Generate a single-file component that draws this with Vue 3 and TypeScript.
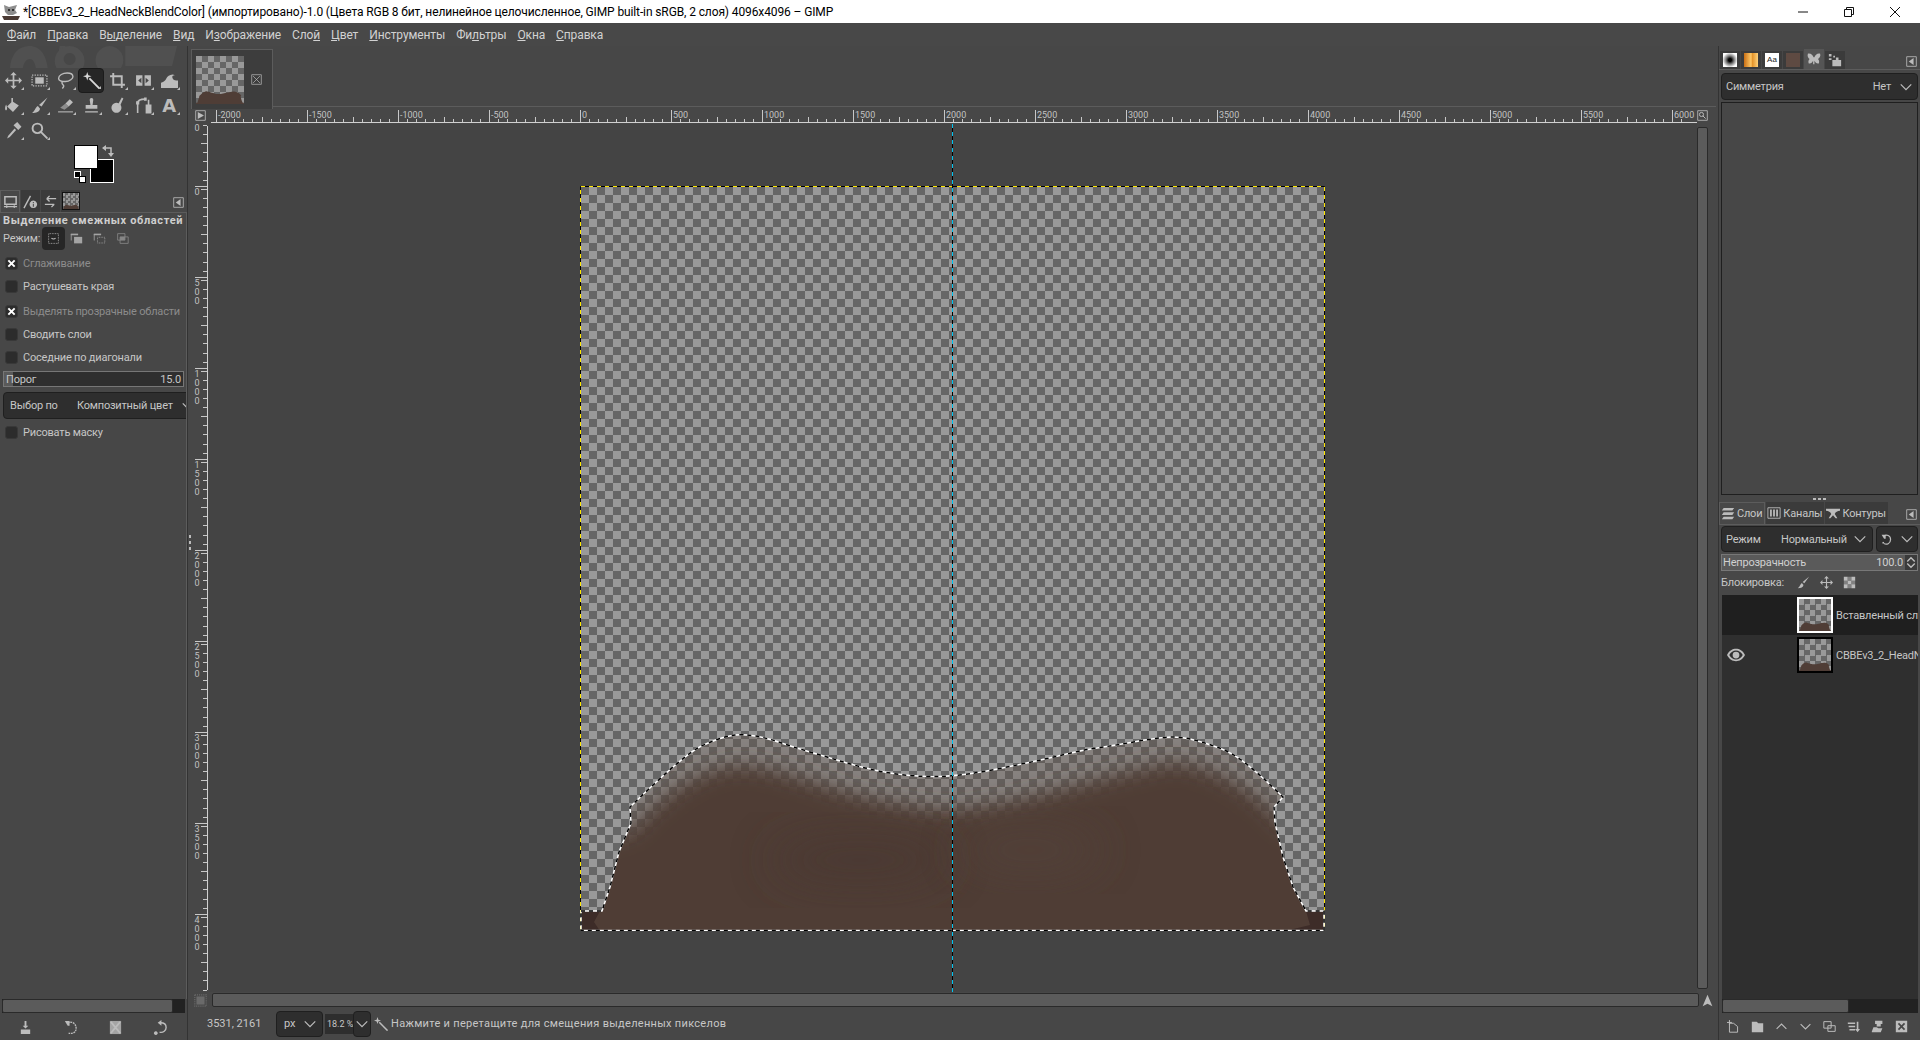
<script setup lang="ts">
import { h } from 'vue'
import type { FunctionalComponent } from 'vue'

interface IconDef { f?: string; s?: string; w?: number; dash?: string }

const icons: Record<string, IconDef[]> = {
  move: [{ s: 'M8 2v12M2 8h12', w: 1.6 }, { f: 'M8 0l3 3H5zM8 16l-3-3h6zM0 8l3-3v6zM16 8l-3 3V5z' }],
  rect: [{ f: 'M4 5h8v6H4z' }, { s: 'M1 3h14v10H1z', w: 1.2, dash: '1.2 1.2' }],
  lasso: [{ s: 'M1.5 6c0-3 4-5 8-5s5.5 2 5.5 3.5-3 4.5-7 4.5-6.5-1-6.5-3zM5 9.5c-1 1 0 2 1 3s0 2-1 3', w: 1.3 }],
  wand: [{ s: 'M6 6l9.5 9.5', w: 1.8 }, { f: 'M4 0l1 3 3 1-3 1-1 3-1-3-3-1 3-1z' }],
  crop: [{ s: 'M4 1v11h11M1 4h11v11', w: 1.8 }],
  transform: [{ f: 'M1 3h6v10H1zM9 3h6v10H9zM3 8l3-2.5v5zM13 8l-3 2.5v-5z' }],
  warp: [{ f: 'M0 15v-5c3-1 4-2 5-4s5-5 8-3c-2 0-3 1-2 3s3 2 5 2v7z' }],
  bucket: [{ f: 'M6 1h1.5v3.5L13 8l-5.5 6L2 9l4-4zM1 7c-1.5 3-1 5.5 0 5.5s1.5-2.5 0-5.5z' }],
  brush: [{ f: 'M15.5 .5L10 9 7.5 7.5zM6.5 8.5c-2.5 1-2 4-5.5 6.5 4 0 7-1 7.5-4z' }],
  eraser: [{ f: 'M8 6l4-4 3 3-4 4z' }, { f: 'M3 10l5-4 3 3-4 3z', w: .6 }, { s: 'M1 14h14', w: 1 }],
  clone: [{ f: 'M8 1c1.5 0 2 1.5 1.5 3L9 7.5h4.5V11h-11V7.5H7l-.5-3.5C6 2.5 6.5 1 8 1z' }, { s: 'M2 14h12', w: 1.2 }],
  smudge: [{ f: 'M7 5.5a4.7 4.7 0 1 0 .01 0z' }, { f: 'M8.5 7l3.5-6.5 1.5 1L10.5 8z' }],
  paths: [{ s: 'M2.5 15V6c0-3 3.5-4 7-4', w: 1.5 }, { f: 'M10 7h5.5v8.5H10zM12 2.5h1.5V7H12zM1 4h3v3H1zM8.5 .5h2.5v3H8.5z' }],
  picker: [{ f: 'M11.5 0l4 4.5-3 3-4.5-4.5z' }, { f: 'M9 6l1.5 1.5-6 6.5-2.5 1.5 1-2.5z' }],
  zoom: [{ s: 'M10.5 6a4.5 4.5 0 1 1-9 0 4.5 4.5 0 0 1 9 0zM9.5 9.5l6 6', w: 1.8 }],
  zoomFit: [{ s: 'M1 1h14v14H1z', w: 1.2 }, { s: 'M9.5 6.5a3 3 0 1 1-6 0 3 3 0 0 1 6 0zM8.5 8.5l4 4', w: 1.4 }],
  modeNew: [{ s: 'M2 2h12v12H2z', w: 1, dash: '1 1' }, { f: 'M6 7a2.5 2.5 0 0 0 4 0l1 1a4 4 0 0 1-6 0z' }],
  modeAdd: [{ f: 'M1 2h9v2H1z' }, { s: 'M1.5 2.5v8', w: 1 }, { f: 'M5 6h10v8H5z' }],
  modeSub: [{ f: 'M1 2h9v2H1z' }, { s: 'M1.5 2.5v8', w: 1 }, { s: 'M5.5 6.5h9v7h-9z', w: 1, dash: '1 1' }],
  modeInt: [{ s: 'M2 2h9v8H2z', w: 1 }, { f: 'M5 6h6v4H5z' }, { s: 'M5 6h10v8H5z', w: 1 }],
  tabTool: [{ s: 'M2 3h12v8H2z', w: 1.6 }, { s: 'M1 13.5h14M4 12v3M12 12v3', w: 1.2 }],
  tabDevice: [{ s: 'M1 15L8 2', w: 1.5 }, { f: 'M11 7a4 4 0 1 0 .01 0zM10.5 8.5h1v1h-1zM10.5 10.5h1v3h-1z' }],
  tabUndo: [{ s: 'M14 5H4M4 5l3-3M4 5l3 3M2 11h10M12 11l-3 3', w: 1.4 }],
  tabButterfly: [{ f: 'M1 2c3-1 6 2 6.5 4h1C9 4 12 1 15 2c1 3-1 5-2.5 6 1 1 2 3 1 5-2 1-4-1-5-3v4H7v-4c-1 2-3 4-5 3-1-2 0-4 1-5C1.5 7 0 5 1 2z' }],
  tabDev: [{ f: 'M1 1h3v3H1zM1 6h3v2H1zM6 3h2v2H6zM5 8h10v7H5zM9 5h3v3H9z' }],
  config: [{ s: 'M1 1h14v14H1z', w: 1.2 }, { f: 'M4 8l7-5v10z' }],
  navRight: [{ s: 'M1 1h14v14H1z', w: 1.2 }, { f: 'M4 3l9 5-9 5z' }],
  close: [{ s: 'M1 1h14v14H1z', w: 1 }, { s: 'M3 3l10 10M13 3L3 13', w: 1 }],
  chevron: [{ s: 'M2 5l6 6 6-6', w: 1.4 }],
  layers: [{ f: 'M3 1h12l-2 3H1zM3 6h12l-2 3H1zM3 11h12l-2 3H1z' }],
  channels: [{ s: 'M1 2h14v12H1z', w: 1 }, { f: 'M3.5 4h2v8h-2zM7 4h2v8H7zM10.5 4h2v8h-2z' }],
  contours: [{ f: 'M0 3h16v2.5c-3 0-5 1.5-6 3.5l3 5h-2L8 10.5 5 14H3l3-5C5 7 3 5.5 0 5.5z' }],
  refresh: [{ s: 'M5 4c3-3 8-1 8 4s-5 7-8 5', w: 1.5 }, { f: 'M2 2h5v5H5z' }, { f: 'M3 11h2v2H3z' }],
  lockPaint: [{ f: 'M15 .5L9 9 7 7.5zM6 8.5c-2 1-2 4-5 6.5 4 0 6.5-1 7-4z' }],
  lockMove: [{ s: 'M8 2v12M2 8h12', w: 1.4 }, { f: 'M8 0l3 3H5zM8 16l-3-3h6zM0 8l3-3v6zM16 8l-3 3V5z' }],
  lockAlpha: [{ f: 'M1 1h4.7v4.7H1zM10.3 1H15v4.7h-4.7zM5.7 5.7h4.6v4.6H5.7zM1 10.3h4.7V15H1zM10.3 10.3H15V15h-4.7z' }, { f: 'M5.7 1h4.6v4.7H5.7zM1 5.7h4.7v4.6H1zM10.3 5.7H15v4.6h-4.7zM5.7 10.3h4.6V15H5.7z', w: .5 }],
  eye: [{ f: 'M0 8c2-4 5-5.5 8-5.5S14 4 16 8c-2 4-5 5.5-8 5.5S2 12 0 8zm2 0c1.5 2.5 3.5 4 6 4s4.5-1.5 6-4c-1.5-2.5-3.5-4-6-4s-4.5 1.5-6 4zm6-3a3 3 0 1 1 0 6 3 3 0 0 1 0-6z' }],
  save: [{ f: 'M7 1h2v5h2l-3 3-3-3h2zM3 10h10v5H3z' }],
  undo: [{ s: 'M5 3c5-2 9 1 9 6s-5 6-8 5', w: 1.4, dash: '2 .8' }, { f: 'M2 1h5v5H5z' }],
  clearX: [{ f: 'M2 1h12v14H2z', w: .8 }, { s: 'M3 2l10 12M13 2L3 14', w: 1.8 }],
  reset: [{ s: 'M8 3c4 0 6 2 6 5s-3 6-7 5', w: 1.5 }, { f: 'M9 0v6L5 3z' }, { f: 'M3 12a2 2 0 1 0 .01 0z' }],
  newLayer: [{ s: 'M3 4h5l5 4v7H3z', w: 1.2 }, { s: 'M3 0v6M0 3h6', w: 1.2 }],
  newGroup: [{ f: 'M1 2h6l2 2h6v11H1z' }],
  up: [{ s: 'M2 11l6-6 6 6', w: 1.4 }],
  dup: [{ s: 'M1 2h9v8H1zM6 7h9v7H6z', w: 1.2 }],
  anchor: [{ s: 'M1 4h9M2 8h8M3 12h7M13 2v11', w: 2 }, { f: 'M10 11h6l-3 4z' }],
  mask: [{ f: 'M5 1h9v4h-2v3H7V5H5zM1 14l2-5h4l2 1h5l-2 5H1z' }],
  del: [{ f: 'M1 1h14v14H1zM3.5 5L6.5 8l-3 3 1.5 1.5 3-3 3 3 1.5-1.5-3-3 3-3L11 3.5l-3 3-3-3z' }],
  nav: [{ f: 'M8 1l6 14-6-3-6 3z' }],
  square: [{ s: 'M1 1h14v14H1z', w: 1.4, dash: '1.4 1.2' }, { f: 'M3 3h10v10H3z' }],
}

const Ico: FunctionalComponent<{ n: string }> = (props) =>
  h(
    'svg',
    { viewBox: '0 0 16 16', class: 'ico' },
    (icons[props.n] ?? []).map((p) =>
      h('path', {
        d: p.f ?? p.s,
        fill: p.f ? 'currentColor' : 'none',
        'fill-rule': 'evenodd',
        opacity: p.f && p.w ? p.w : undefined,
        stroke: p.s ? 'currentColor' : undefined,
        'stroke-width': p.s ? p.w : undefined,
        'stroke-dasharray': p.dash,
      }),
    ),
  )
Ico.props = ['n']

const menus: [string, string, string][] = [
  ['', 'Ф', 'айл'],
  ['', 'П', 'равка'],
  ['В', 'ы', 'деление'],
  ['', 'В', 'ид'],
  ['И', 'з', 'ображение'],
  ['Сло', 'й', ''],
  ['', 'Ц', 'вет'],
  ['', 'И', 'нструменты'],
  ['Фи', 'л', 'ьтры'],
  ['', 'О', 'кна'],
  ['', 'С', 'правка'],
]

const tools = ['move', 'rect', 'lasso', 'wand', 'crop', 'transform', 'warp', 'bucket', 'brush', 'eraser', 'clone', 'smudge', 'paths', 'text', 'picker', 'zoom']

const checks1 = [
  { label: 'Сглаживание', on: true },
  { label: 'Растушевать края', on: false },
  { label: 'Выделять прозрачные области', on: true, gap: true },
  { label: 'Сводить слои', on: false },
  { label: 'Соседние по диагонали', on: false },
]

// ruler geometry: 91px per 500 image pixels
const step = 91
const hMajors = Array.from({ length: 17 }, (_, i) => ({ x: 7 + i * step, label: String(-2000 + i * 500) }))
const hTicks = Array.from({ length: 162 }, (_, i) => ({ x: 7 + i * (step / 10), long: i % 5 === 0 }))
const vMajors = Array.from({ length: 11 }, (_, i) => ({ y: -29 + i * step, digits: String(-500 + i * 500).split('') }))
const vTicks = Array.from({ length: 96 }, (_, i) => ({ y: 1 + i * (step / 10), long: (i + 3) % 5 === 0 }))

type Pt = [number, number]

function smooth(pts: Pt[]): string {
  let d = ''
  for (let i = 1; i < pts.length - 1; i++) {
    const mx = (pts[i][0] + pts[i + 1][0]) / 2
    const my = (pts[i][1] + pts[i + 1][1]) / 2
    d += ` Q${pts[i][0]} ${pts[i][1]} ${mx} ${my}`
  }
  const last = pts[pts.length - 1]
  return `${d} L${last[0]} ${last[1]}`
}

const ridge: Pt[] = [
  [630, 807], [660, 778], [693, 750], [710, 742], [727, 736], [743, 734], [767, 738], [793, 747],
  [827, 757], [860, 767], [893, 774], [927, 777], [953, 776], [983, 772], [1017, 765], [1050, 758],
  [1083, 750], [1117, 745], [1150, 739], [1177, 736], [1203, 742], [1233, 753], [1260, 775], [1283, 797],
]

// outline of the selected skin area, in screen pixels
const outline =
  'M581 911 L602 911 L610 887 L619 852 L631 823 L630 807' +
  smooth(ridge) +
  ' L1274 807 L1275 823 L1283 857 L1293 887 L1306 911 L1324 911 L1324 930.5 L581 930.5 Z'
</script>

<template>
  <div class="window">
    <header class="titlebar">
      <svg class="app-icon" viewBox="0 0 18 16">
        <path d="M2 1l5 2 8-2-2 5 2 3-4 2H6L3 8z" fill="#8d8d8d" />
        <path d="M6 5h2v2H6zM10 5h2v2h-2z" fill="#333" />
        <path d="M0 12h18l-2 4H2z" fill="#4a3a34" />
      </svg>
      <span class="title-text">*[CBBEv3_2_HeadNeckBlendColor] (импортировано)-1.0 (Цвета RGB 8 бит, нелинейное целочисленное, GIMP built-in sRGB, 2 слоя) 4096x4096 – GIMP</span>
      <div class="win-btns">
        <svg viewBox="0 0 10 10"><path d="M0 5h10" stroke="#111" fill="none" /></svg>
        <svg viewBox="0 0 10 10"><path d="M.5 2.5h7v7h-7zM2.5 2.5v-2h7v7h-2" stroke="#111" fill="none" /></svg>
        <svg viewBox="0 0 10 10"><path d="M0 0l10 10M10 0L0 10" stroke="#111" fill="none" /></svg>
      </div>
    </header>

    <nav class="menubar">
      <span v-for="m in menus" :key="m[0] + m[1] + m[2]" class="menu-item">{{ m[0] }}<u>{{ m[1] }}</u>{{ m[2] }}</span>
    </nav>

    <div class="main">
      <aside class="left-dock">
        <svg class="wilber" viewBox="0 0 188 22">
          <path d="M10 22c2-18 12-22 20-22s16 6 18 22H36c-1-6-3-9-6-9s-6 3-7 9z" fill="#505050" />
          <path d="M60 0h6L56 22z" fill="#505050" />
          <path d="M70 0a15 15 0 1 0 .01 0zm0 7a6 6 0 1 1-.01 0z" fill="#505050" fill-rule="evenodd" />
          <path d="M110 0a14 14 0 1 0 .01 0z" fill="#505050" />
          <path d="M126 0h52l-5 20h-47z" fill="#505050" />
        </svg>
        <div class="tool-grid">
          <div v-for="t in tools" :key="t" class="tool" :class="{ active: t === 'wand' }">
            <span v-if="t === 'text'" class="tool-a">A</span>
            <Ico v-else :n="t" />
          </div>
        </div>
        <div class="colors">
          <div class="swatch-bg"></div>
          <div class="swatch-fg"></div>
          <svg class="swap" viewBox="0 0 12 12">
            <path d="M1 3h8v6" fill="none" stroke="#bdbdbd" stroke-width="1.5" />
            <path d="M4 0v6L0 3zM6 8h6l-3 4z" fill="#bdbdbd" />
          </svg>
          <div class="mini-black"></div>
          <div class="mini-white"></div>
        </div>

        <div class="dock-tabs">
          <div class="dtab on"><Ico n="tabTool" /></div>
          <div class="dtab"><Ico n="tabDevice" /></div>
          <div class="dtab"><Ico n="tabUndo" /></div>
          <div class="dtab">
            <div class="thumb tiny"><svg viewBox="580 186 745 745" preserveAspectRatio="none"><path :d="outline" fill="#4f3d36" /></svg></div>
          </div>
          <Ico n="config" class="cfg" />
        </div>
        <div class="options">
          <div class="opt-title">Выделение смежных областей</div>
          <div class="mode-row">
            <span class="mode-label">Режим:</span>
            <div class="mode-btn on"><Ico n="modeNew" /></div>
            <div class="mode-btn"><Ico n="modeAdd" /></div>
            <div class="mode-btn"><Ico n="modeSub" /></div>
            <div class="mode-btn faded"><Ico n="modeInt" /></div>
          </div>
          <div v-for="c in checks1" :key="c.label" class="check-row" :class="{ gap: c.gap, dim: c.on }">
            <span class="check"><svg v-if="c.on" viewBox="0 0 10 10"><path d="M1.5 1.5l7 7M8.5 1.5l-7 7" stroke="#fff" stroke-width="2.2" /></svg></span>
            {{ c.label }}
          </div>
          <div class="spin">
            <div class="spin-fill"></div>
            <span>Порог</span><span>15.0</span>
          </div>
          <div class="combo wide">
            <span class="combo-a">Выбор по</span>
            <span>Композитный цвет</span>
            <Ico n="chevron" class="chev clipped" />
          </div>
          <div class="check-row last"><span class="check"></span>Рисовать маску</div>
        </div>
        <div class="scroll-row">
          <div class="scroll-track"><div class="scroll-thumb left-thumb"></div></div>
        </div>
        <div class="icon-row spread">
          <Ico n="save" /><Ico n="undo" /><Ico n="clearX" /><Ico n="reset" />
        </div>
        <div class="sash-dots"><i></i><i></i><i></i></div>
      </aside>

      <section class="center">
        <div class="img-tabs">
          <div class="img-tab">
            <div class="thumb big"><svg viewBox="580 186 745 745" preserveAspectRatio="none"><path :d="outline" fill="#4f3d36" /></svg></div>
            <Ico n="close" class="tab-close" />
          </div>
        </div>
        <div class="view">
          <div class="corner"><Ico n="navRight" /></div>
          <svg class="hruler" width="1488" height="17">
            <line x1="2" y1="15.5" x2="1488" y2="15.5" stroke="#d0d0d0" />
            <line v-for="t in hTicks" :key="t.x" :x1="Math.round(t.x) + .5" :x2="Math.round(t.x) + .5" :y1="t.long ? 10 : 12" y2="15" stroke="#c8c8c8" />
            <g v-for="m in hMajors" :key="m.label">
              <line :x1="m.x + .5" :x2="m.x + .5" y1="3" y2="15" stroke="#c8c8c8" />
              <text :x="m.x + 2" y="11" class="rtext">{{ m.label }}</text>
            </g>
          </svg>
          <div class="corner-r"><Ico n="zoomFit" /></div>
          <svg class="vruler" width="18" height="868">
            <line x1="16.5" y1="2" x2="16.5" y2="866" stroke="#d0d0d0" />
            <line v-for="t in vTicks" :key="t.y" :y1="Math.round(t.y) + .5" :y2="Math.round(t.y) + .5" :x1="t.long ? 10 : 12" x2="16" stroke="#c8c8c8" />
            <g v-for="m in vMajors" :key="m.y">
              <line :y1="m.y + .5" :y2="m.y + .5" x1="4" x2="16" stroke="#c8c8c8" />
              <text v-for="(d, i) in m.digits" :key="i" x="6" :y="m.y + 9 + i * 9" class="rtext" text-anchor="middle">{{ d }}</text>
            </g>
          </svg>
          <div class="canvas">
            <svg class="image" viewBox="580 186 745 745" width="745" height="745">
              <defs>
                <pattern id="checker" x="581" y="187" width="16" height="16" patternUnits="userSpaceOnUse">
                  <rect width="16" height="16" fill="#999" />
                  <rect width="8" height="8" fill="#666" />
                  <rect x="8" y="8" width="8" height="8" fill="#666" />
                </pattern>
                <clipPath id="skin"><path :d="outline" /></clipPath>
                <filter id="soft" x="-10%" y="-30%" width="120%" height="160%"><feGaussianBlur stdDeviation="10" /></filter>
                <filter id="softer" x="-30%" y="-50%" width="160%" height="200%"><feGaussianBlur stdDeviation="22" /></filter>
              </defs>
              <rect x="581" y="187" width="744" height="744" fill="url(#checker)" />
              <g clip-path="url(#skin)">
                <path :d="outline" fill="#5f4e47" opacity=".3" />
                <path d="M540 960L540 860 634 828C670 785 715 762 750 766 800 772 860 805 950 810 1020 805 1100 775 1175 762 1215 768 1250 785 1285 825L1360 860 1360 960Z" fill="#4f3d36" filter="url(#soft)" />
                <ellipse cx="860" cy="860" rx="90" ry="24" fill="#4a3932" opacity=".7" filter="url(#softer)" />
                <ellipse cx="1030" cy="850" rx="70" ry="22" fill="#53423a" opacity=".7" filter="url(#softer)" />
                <path d="M581 911H600L594 922 600 931H581Z" fill="#3d2c28" />
                <path d="M1306 911H1324V931H1285L1310 925Z" fill="#3d2c28" />
              </g>
              <path d="M580.5 930V186.5H1324.5V930" fill="none" stroke="#000" />
              <path d="M580.5 930V186.5H1324.5V930" fill="none" stroke="#ffe800" stroke-dasharray="4 4" />
              <path :d="outline" fill="none" stroke="#fff" stroke-width="1.5" />
              <path :d="outline" fill="none" stroke="#000" stroke-width="1.5" stroke-dasharray="4 4" />
            </svg>
            <div class="guide"></div>
          </div>
          <div class="vscroll"><div class="vscroll-thumb"></div></div>
        </div>
        <div class="hscroll-row">
          <Ico n="square" class="qmask" />
          <div class="hscroll"></div>
          <Ico n="nav" class="navigate" />
        </div>
        <footer class="status">
          <span class="coords">3531, 2161</span>
          <div class="combo unit"><span>px</span><Ico n="chevron" class="chev" /></div>
          <div class="zoom-entry">18.2 %</div>
          <div class="combo zoom-arrow"><Ico n="chevron" class="chev" /></div>
          <Ico n="wand" class="status-wand" />
          <span class="hint">Нажмите и перетащите для смещения выделенных пикселов</span>
        </footer>
      </section>

      <aside class="right-dock">
        <div class="dock-tabs right">
          <div class="rtab"><div class="brush-prev"></div></div>
          <div class="rtab"><div class="grad-prev"></div></div>
          <div class="rtab"><div class="font-prev">Aa</div></div>
          <div class="rtab"><div class="pat-prev"></div></div>
          <div class="rtab on"><Ico n="tabButterfly" /></div>
          <div class="rtab"><Ico n="tabDev" /></div>
          <Ico n="config" class="cfg" />
        </div>
        <div class="upper">
          <div class="combo sym"><span>Симметрия</span><span class="sym-val">Нет</span><Ico n="chevron" class="chev" /></div>
          <div class="sym-box"></div>
        </div>
        <div class="sash-h"><i></i><i></i><i></i></div>
        <div class="dock-tabs right lower">
          <div class="ltab on"><Ico n="layers" />Слои</div>
          <div class="ltab"><Ico n="channels" />Каналы</div>
          <div class="ltab"><Ico n="contours" />Контуры</div>
          <Ico n="config" class="cfg" />
        </div>
        <div class="layers-panel">
          <div class="mode-line">
            <div class="combo lmode"><span>Режим</span><span>Нормальный</span><Ico n="chevron" class="chev" /></div>
            <div class="combo lswitch"><Ico n="refresh" /><Ico n="chevron" class="chev" /></div>
          </div>
          <div class="opacity">
            <div class="opacity-bar"><span>Непрозрачность</span><span>100.0</span></div>
            <div class="spin-btns"><svg viewBox="0 0 12 16"><path d="M2 7l4-4 4 4M2 9l4 4 4-4" fill="none" stroke="#bdbdbd" stroke-width="1.5" /></svg></div>
          </div>
          <div class="lock-row">
            <span>Блокировка:</span>
            <Ico n="lockPaint" /><Ico n="lockMove" /><Ico n="lockAlpha" />
          </div>
          <div class="layer-list">
            <div class="layer sel">
              <div class="eye-cell"></div>
              <div class="thumb lay white"><svg viewBox="580 186 745 745" preserveAspectRatio="none"><path :d="outline" fill="#4f3d36" /></svg></div>
              <span class="layer-name">Вставленный слой</span>
            </div>
            <div class="layer">
              <div class="eye-cell"><Ico n="eye" class="eye" /></div>
              <div class="thumb lay black"><svg viewBox="580 186 745 745" preserveAspectRatio="none"><path :d="outline" fill="#4f3d36" /></svg></div>
              <span class="layer-name">CBBEv3_2_HeadNeckBlendColor</span>
            </div>
          </div>
          <div class="scroll-row r">
            <div class="scroll-track"><div class="scroll-thumb right-thumb"></div></div>
          </div>
          <div class="icon-row tight">
            <Ico n="newLayer" /><Ico n="newGroup" /><Ico n="up" /><Ico n="chevron" /><Ico n="dup" /><Ico n="anchor" /><Ico n="mask" /><Ico n="del" />
          </div>
        </div>
      </aside>
    </div>
  </div>
</template>

<style>
html, body {
  margin: 0;
  background: #474747;
  overflow: hidden;
}
</style>

<style scoped>
.window {
  width: 1920px;
  height: 1040px;
  display: flex;
  flex-direction: column;
  overflow: hidden;
  background: #474747;
  color: #c6c6c6;
  font-family: Roboto, "Open Sans", sans-serif;
  font-size: 11px;
  letter-spacing: -.2px;
}
.ico {
  display: block;
  width: 16px;
  height: 16px;
  color: #bcbcbc;
  flex: none;
}

/* title and menu */
.titlebar {
  height: 23px;
  flex: none;
  background: #fff;
  display: flex;
  align-items: center;
  color: #000;
  font-size: 12px;
}
.app-icon {
  width: 18px;
  height: 16px;
  margin: 0 3px 0 2px;
}
.title-text {
  white-space: nowrap;
  letter-spacing: -.115px;
}
.win-btns {
  margin-left: auto;
  display: flex;
  gap: 36px;
  padding-right: 20px;
}
.win-btns svg {
  width: 10px;
  height: 10px;
  display: block;
}
.menubar {
  height: 23px;
  flex: none;
  background: #484848;
  display: flex;
  align-items: center;
  gap: 11px;
  padding-left: 7px;
  font-size: 12px;
  letter-spacing: -.12px;
  color: #d2d2d2;
}

.main {
  flex: 1;
  display: flex;
  min-height: 0;
}

/* left dock */
.left-dock {
  width: 187px;
  flex: none;
  display: flex;
  flex-direction: column;
  border-right: 1px solid #333;
  position: relative;
}
.wilber {
  width: 187px;
  height: 22px;
  flex: none;
}
.tool-grid {
  display: grid;
  grid-template-columns: repeat(7, 26px);
  grid-auto-rows: 25px;
  height: 75px;
  flex: none;
}
.tool {
  display: flex;
  align-items: center;
  justify-content: center;
  position: relative;
  border-radius: 4px;
}
.tool .ico {
  width: 17px;
  height: 17px;
}
.tool::after {
  content: "";
  position: absolute;
  right: 2px;
  bottom: 3px;
  border-left: 3px solid transparent;
  border-bottom: 3px solid #bcbcbc;
}
.tool.active {
  background: #262626;
  border: 1px solid #1b1b1b;
  box-sizing: border-box;
}
.tool.active .ico {
  color: #d8d8d8;
}
.tool-a {
  font: bold 18px "DejaVu Sans", sans-serif;
  color: #bcbcbc;
}
.colors {
  position: relative;
  height: 47px;
  flex: none;
}
.swatch-fg,
.swatch-bg {
  position: absolute;
  box-sizing: border-box;
  width: 24px;
  height: 24px;
}
.swatch-fg {
  left: 74px;
  top: 2px;
  background: #fff;
  border: 1px solid #000;
}
.swatch-bg {
  left: 90px;
  top: 16px;
  background: #000;
  border: 1px solid #fff;
}
.swap {
  position: absolute;
  left: 102px;
  top: 2px;
  width: 12px;
  height: 12px;
}
.mini-black,
.mini-white {
  position: absolute;
  box-sizing: border-box;
  width: 7px;
  height: 7px;
}
.mini-black {
  left: 74px;
  top: 28px;
  background: #000;
  border: 1px solid #fff;
}
.mini-white {
  left: 79px;
  top: 33px;
  background: #fff;
  border: 1px solid #000;
}

.dock-tabs {
  height: 22px;
  flex: none;
  display: flex;
  align-items: stretch;
  position: relative;
}
.dtab {
  width: 19px;
  background: #3b3b3b;
  margin-right: 1px;
  display: flex;
  align-items: center;
  justify-content: center;
}
.dtab.on {
  background: #484848;
  border: 1px solid #5c5c5c;
  border-bottom: none;
  box-sizing: border-box;
  width: 20px;
}
.dtab .ico {
  width: 15px;
  height: 15px;
}
.cfg {
  position: absolute;
  right: 3px;
  top: 7px;
  width: 11px !important;
  height: 11px !important;
}
.options {
  flex: 1;
  box-sizing: border-box;
  border-top: 1px solid #5c5c5c;
  border-right: 1px solid #5c5c5c;
  padding: 0 0 0 3px;
  overflow: hidden;
  min-height: 0;
}
.opt-title {
  height: 16px;
  line-height: 16px;
  font-weight: 700;
  white-space: nowrap;
  color: #cfcfcf;
  font-size: 11px;
  letter-spacing: .65px;
}
.mode-row {
  height: 23px;
  display: flex;
  align-items: center;
  margin-top: -2px;
  margin-bottom: 2px;
}
.mode-label {
  width: 39px;
  flex: none;
}
.mode-btn {
  width: 23px;
  height: 23px;
  display: flex;
  align-items: center;
  justify-content: center;
  opacity: .8;
}
.mode-btn.on {
  background: #262626;
  border-radius: 4px;
  opacity: 1;
}
.mode-btn.faded {
  opacity: .55;
}
.mode-btn .ico {
  width: 13px;
  height: 13px;
}
.check-row {
  height: 23px;
  display: flex;
  align-items: center;
  gap: 5px;
  padding-left: 2px;
  white-space: nowrap;
  font-size: 11px;
}
.check-row.gap {
  margin-top: 2px;
}
.check-row.dim {
  color: #8c8c8c;
}
.check-row.last {
  margin-top: 2px;
}
.check {
  width: 13px;
  height: 13px;
  flex: none;
  border-radius: 3px;
  background: #2c2c2c;
  border: 1px solid #383838;
  box-sizing: border-box;
  display: flex;
  align-items: center;
  justify-content: center;
}
.check svg {
  width: 9px;
  height: 9px;
}
.spin {
  position: relative;
  height: 16px;
  margin-top: 2px;
  box-sizing: border-box;
  margin-right: 2px;
  border: 1px solid #777;
  background: #2f2f2f;
  display: flex;
  justify-content: space-between;
  align-items: center;
  padding: 0 2px;
}
.spin span {
  position: relative;
}
.spin-fill {
  position: absolute;
  left: 0;
  top: 0;
  bottom: 0;
  width: 9px;
  background: #5a5a5a;
}
.combo {
  display: flex;
  align-items: center;
  background: #2e2e2e;
  border: 1px solid #1f1f1f;
  border-radius: 4px;
  box-sizing: border-box;
  color: #c6c6c6;
}
.chev {
  width: 14px !important;
  height: 14px !important;
}
.combo.wide {
  height: 27px;
  margin-top: 5px;
  margin-right: -6px;
  padding-left: 6px;
  white-space: nowrap;
}
.combo-a {
  width: 67px;
  flex: none;
}
.clipped {
  margin-left: 8px;
}
.scroll-row {
  height: 14px;
  flex: none;
  padding: 0 2px;
  margin-bottom: 1px;
}
.scroll-track {
  height: 14px;
  background: #222;
}
.scroll-thumb {
  height: 14px;
  background: #5b5b5b;
  border: 1px solid #2a2a2a;
  box-sizing: border-box;
  border-radius: 2px;
}
.left-thumb {
  width: 171px;
}
.icon-row {
  flex: none;
  height: 26px;
  display: flex;
  align-items: center;
}
.icon-row.spread {
  padding-left: 18px;
  gap: 30px;
}
.icon-row .ico {
  width: 15px;
  height: 15px;
}
.sash-dots {
  position: absolute;
  right: -4px;
  top: 489px;
  display: flex;
  flex-direction: column;
  gap: 3px;
}
.sash-dots i {
  width: 2px;
  height: 3px;
  background: #bcbcbc;
}

/* center */
.center {
  flex: 1;
  min-width: 0;
  display: flex;
  flex-direction: column;
  margin-left: 3px;
}
.img-tabs {
  height: 61px;
  flex: none;
  border-bottom: 1px solid #5c5c5c;
  box-sizing: border-box;
  display: flex;
}
.img-tab {
  width: 82px;
  height: 60px;
  background: #3d3d3d;
  border-top: 1px solid #5c5c5c;
  border-left: 1px solid #5c5c5c;
  border-right: 1px solid #5c5c5c;
  box-sizing: border-box;
  margin-top: 3px;
  display: flex;
  align-items: center;
  gap: 7px;
  padding-left: 4px;
}
.tab-close {
  width: 11px !important;
  height: 11px !important;
}
.thumb {
  background-color: #999;
  background-image: conic-gradient(#666 25%, transparent 0 50%, #666 0 75%, transparent 0);
  box-sizing: border-box;
  flex: none;
}
.thumb svg {
  display: block;
  width: 100%;
  height: 100%;
}
.thumb.big {
  width: 48px;
  height: 48px;
  background-size: 12px 12px;
}
.thumb.tiny {
  width: 16px;
  height: 16px;
  background-size: 5px 5px;
  outline: 1px solid #111;
}
.thumb.lay {
  width: 36px;
  height: 36px;
  background-size: 11px 11px;
  background-origin: content-box;
}
.thumb.white {
  border: 2px solid #fff;
}
.thumb.black {
  border: 2px solid #000;
}
.view {
  flex: 1;
  min-height: 0;
  display: grid;
  grid-template-columns: 18px 1488px 19px;
  grid-template-rows: 17px 1fr;
}
.corner {
  display: flex;
  align-items: center;
  padding-left: 4px;
}
.corner .ico {
  width: 11px;
  height: 11px;
}
.corner-r {
  display: flex;
  align-items: center;
}
.corner-r .ico {
  width: 11px;
  height: 11px;
}
.hruler,
.vruler {
  display: block;
  overflow: hidden;
}
.rtext {
  font: 9px Roboto, sans-serif;
  letter-spacing: 0;
  fill: #c2c2c2;
}
.canvas {
  position: relative;
  overflow: hidden;
  min-width: 0;
  background: #444;
}
.image {
  position: absolute;
  left: 371px;
  top: 62px;
  display: block;
}
.guide {
  position: absolute;
  left: 743px;
  top: 0;
  bottom: 0;
  width: 1px;
  background: repeating-linear-gradient(#00c4f0 0 4px, #000 4px 8px);
}
.vscroll {
  padding: 3px 8px 3px 0;
}
.vscroll-thumb {
  height: 100%;
  background: #5b5b5b;
  border: 1px solid #2a2a2a;
  box-sizing: border-box;
  border-radius: 2px;
}
.hscroll-row {
  height: 16px;
  flex: none;
  display: flex;
  align-items: center;
}
.qmask {
  width: 13px !important;
  height: 13px !important;
  margin: 0 5px 0 3px;
  color: #6a6a6a;
}
.hscroll {
  flex: 1;
  height: 14px;
  background: #5b5b5b;
  border: 1px solid #2a2a2a;
  box-sizing: border-box;
  border-radius: 2px;
}
.navigate {
  width: 13px !important;
  height: 13px !important;
  margin: 0 2px;
}
.status {
  height: 32px;
  flex: none;
  display: flex;
  align-items: center;
  padding-bottom: 1px;
  box-sizing: border-box;
  white-space: nowrap;
}
.coords {
  width: 85px;
  flex: none;
  padding-left: 16px;
  box-sizing: border-box;
  letter-spacing: 0;
}
.combo.unit {
  width: 47px;
  height: 26px;
  padding-left: 7px;
  justify-content: space-between;
  padding-right: 5px;
  margin-right: 2px;
}
.zoom-entry {
  width: 28px;
  height: 20px;
  background: #2e2e2e;
  font-size: 9px;
  line-height: 20px;
  letter-spacing: 0;
  overflow: hidden;
  white-space: nowrap;
  padding-left: 2px;
  box-sizing: border-box;
}
.combo.zoom-arrow {
  width: 18px;
  height: 26px;
  justify-content: center;
  margin-right: 3px;
}
.status-wand {
  width: 14px !important;
  height: 14px !important;
  margin-right: 3px;
}
.hint {
  letter-spacing: .3px;
}

/* right dock */
.right-dock {
  width: 202px;
  flex: none;
  display: flex;
  flex-direction: column;
  border-left: 1px solid #333;
  margin-left: 2px;
  box-sizing: border-box;
}
.dock-tabs.right {
  margin-top: 3px;
  height: 20px;
  padding-left: 1px;
  align-items: flex-end;
}
.rtab {
  width: 20px;
  height: 18px;
  background: #3b3b3b;
  margin-right: 1px;
  display: flex;
  align-items: center;
  justify-content: center;
}
.rtab.on {
  height: 20px;
  background: #555;
}
.rtab .ico {
  width: 14px;
  height: 14px;
}
.brush-prev {
  width: 14px;
  height: 14px;
  background: radial-gradient(circle, #000 0 15%, #777 40%, #fff 75%);
}
.grad-prev {
  width: 14px;
  height: 14px;
  background: linear-gradient(90deg, #c96f15, #ffc866 50%, #e5942a 60%, #ffd27a);
}
.font-prev {
  width: 14px;
  height: 14px;
  background: #fff;
  color: #222;
  font: 8px/14px "Liberation Sans", sans-serif;
  letter-spacing: 0;
  text-align: center;
}
.pat-prev {
  width: 14px;
  height: 14px;
  background: #5e4a42;
}
.upper {
  height: 426px;
  flex: none;
  border-top: 1px solid #5c5c5c;
  box-sizing: border-box;
  padding: 3px 2px 0 2px;
  display: flex;
  flex-direction: column;
  gap: 2px;
}
.combo.sym {
  height: 27px;
  flex: none;
  padding: 0 4px 0 4px;
  font-size: 11px;
}
.sym-val {
  margin-left: auto;
  margin-right: 8px;
}
.sym-box {
  flex: 1;
  border: 1px solid #1f1f1f;
}
.sash-h {
  height: 7px;
  flex: none;
  display: flex;
  justify-content: center;
  align-items: center;
  gap: 2px;
}
.sash-h i {
  width: 3px;
  height: 2px;
  background: #bcbcbc;
}
.dock-tabs.lower {
  margin-top: 0;
  height: 22px;
  padding-left: 0;
  align-items: stretch;
}
.ltab {
  display: flex;
  align-items: center;
  gap: 2px;
  background: #3b3b3b;
  margin-right: 1px;
  padding: 0 2px 0 1px;
  white-space: nowrap;
  font-size: 11px;
}
.ltab.on {
  background: #484848;
  border: 1px solid #5c5c5c;
  border-bottom: none;
}
.ltab .ico {
  width: 14px;
  height: 14px;
}
.layers-panel {
  flex: 1;
  min-height: 0;
  border-top: 1px solid #5c5c5c;
  box-sizing: border-box;
  display: flex;
  flex-direction: column;
  padding: 1px 2px 0;
}
.mode-line {
  display: flex;
  gap: 3px;
  height: 26px;
  flex: none;
}
.combo.lmode {
  flex: 1;
  padding: 0 5px 0 4px;
}
.lmode span:first-child {
  width: 55px;
}
.lmode .chev {
  margin-left: auto;
}
.combo.lswitch {
  width: 42px;
  justify-content: space-between;
  padding: 0 3px;
}
.lswitch .ico:first-child {
  width: 13px;
  height: 13px;
}
.opacity {
  height: 17px;
  margin-top: 2px;
  display: flex;
  flex: none;
  border: 1px solid #777;
  box-sizing: border-box;
}
.opacity-bar {
  flex: 1;
  background: #5a5a5a;
  display: flex;
  justify-content: space-between;
  align-items: center;
  padding: 0 2px 0 1px;
  color: #d0d0d0;
}
.spin-btns {
  width: 12px;
  background: #3a3a3a;
}
.spin-btns svg {
  display: block;
  width: 12px;
  height: 15px;
}
.lock-row {
  height: 23px;
  flex: none;
  display: flex;
  align-items: center;
  gap: 8px;
  font-size: 11px;
}
.lock-row span {
  width: 68px;
}
.lock-row .ico {
  width: 13px;
  height: 13px;
  margin-right: 2px;
}
.layer-list {
  flex: 1;
  min-height: 0;
  background: #2f2f2f;
  margin-left: 1px;
  overflow: hidden;
  margin-top: 1px;
}
.layer {
  height: 40px;
  display: flex;
  align-items: center;
  white-space: nowrap;
  overflow: hidden;
}
.layer.sel {
  background: #1f1f1f;
}
.eye-cell {
  width: 75px;
  flex: none;
  padding-left: 5px;
  box-sizing: border-box;
}
.eye {
  width: 18px !important;
  height: 18px !important;
}
.layer-name {
  margin-left: 3px;
}
.scroll-row.r {
  padding: 0;
  margin: 0 0 0 1px;
}
.right-thumb {
  width: 127px;
}
.icon-row.tight {
  justify-content: space-between;
  padding: 0 10px 0 6px;
  height: 27px;
}
.icon-row.tight .ico {
  width: 13px;
  height: 13px;
}
</style>
